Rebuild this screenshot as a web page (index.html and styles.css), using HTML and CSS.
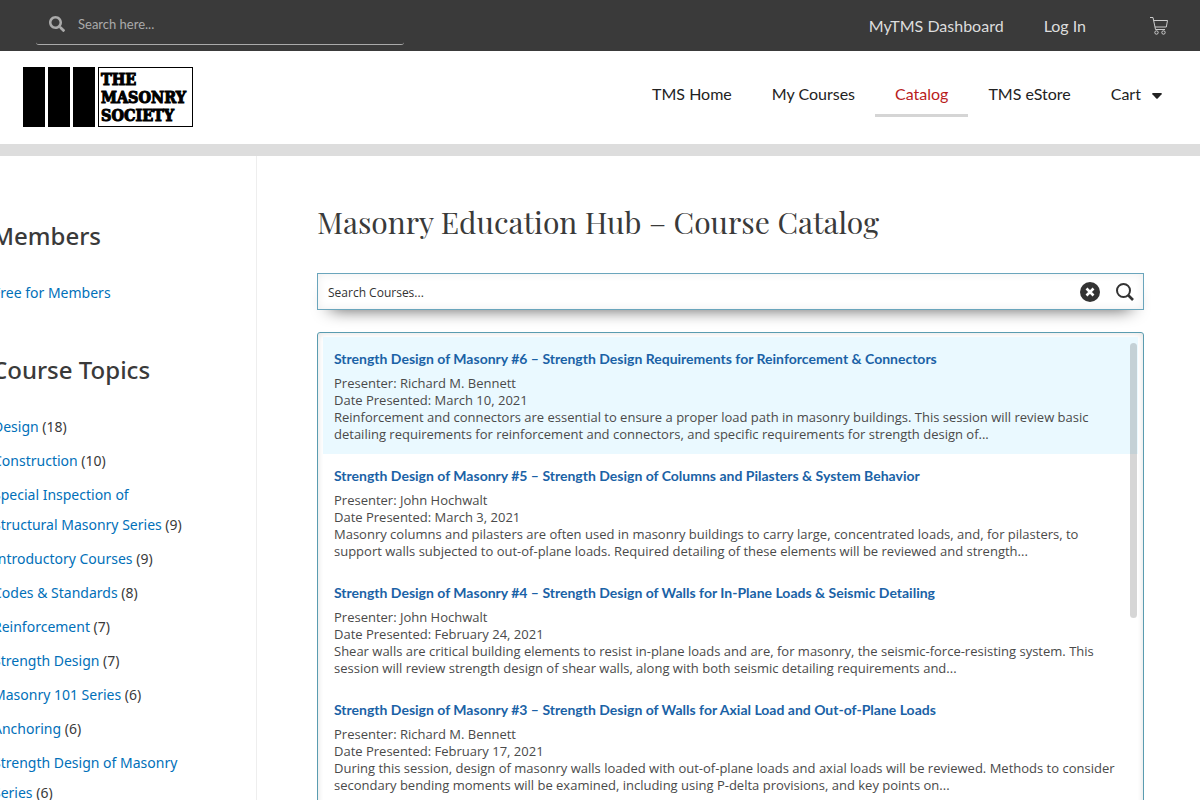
FILE: index.html
```html
<!DOCTYPE html>
<html lang="en">
<head>
    <meta charset="UTF-8">
    <meta name="viewport" content="width=device-width, initial-scale=1.0">
    <title>Masonry Education Hub</title>
    <link rel="stylesheet" href="styles.css">
</head>
<body>
    <div class="top-bar">
        <form class="site-search">
            <svg class="icon-search" viewBox="0 0 512 512" aria-hidden="true"><path fill="currentColor" d="M505 442.700L405.300 343c-4.500-4.500-10.600-7-17-7H372c27.600-35.300 44-79.700 44-128C416 93.100 322.900 0 208 0S0 93.100 0 208s93.100 208 208 208c48.300 0 92.700-16.400 128-44v16.300c0 6.400 2.500 12.500 7 17l99.700 99.700c9.400 9.400 24.600 9.400 33.900 0l28.300-28.300c9.400-9.400 9.400-24.600.1-34zM208 336c-70.700 0-128-57.200-128-128 0-70.700 57.200-128 128-128 70.700 0 128 57.200 128 128 0 70.700-57.200 128-128 128z"/></svg>
            <input type="search" placeholder="Search here..." aria-label="Search">
        </form>
        <nav class="account-nav">
            <a href="#">MyTMS Dashboard</a>
            <a href="#">Log In</a>
            <a href="#" class="basket" aria-label="View cart">
                <svg viewBox="0 0 18 18" fill="none" stroke="currentColor" aria-hidden="true">
                    <path d="M0 .5h3l2.500 12h9.500M3.700 3.500h13.800l-1.200 6.500H5"/>
                    <circle cx="6.500" cy="15.500" r="1.700"/>
                    <circle cx="13.500" cy="15.500" r="1.700"/>
                </svg>
            </a>
        </nav>
    </div>

    <header class="site-header">
        <a href="#" class="logo">
            <span class="bar"></span>
            <span class="bar"></span>
            <span class="bar"></span>
            <span class="logo-text">THE<br>MASONRY<br>SOCIETY</span>
        </a>
        <nav class="main-nav">
            <a href="#">TMS Home</a>
            <a href="#">My Courses</a>
            <a href="#" class="active">Catalog</a>
            <a href="#">TMS eStore</a>
            <a href="#">Cart <svg class="caret" viewBox="0 0 10 6" aria-hidden="true"><path fill="currentColor" d="M1 0h8q1.300.2.600 1.200L5.700 5.500q-.7.700-1.400 0L.4 1.200Q-.3.200 1 0z"/></svg></a>
        </nav>
    </header>

    <div class="content">
        <aside class="sidebar">
            <h2>Members</h2>
            <ul>
                <li><a href="#">Free for Members</a></li>
            </ul>
            <h2>Course Topics</h2>
            <ul>
                <li><a href="#">Design</a> (18)</li>
                <li><a href="#">Construction</a> (10)</li>
                <li><a href="#">Special Inspection of Structural Masonry Series</a> (9)</li>
                <li><a href="#">Introductory Courses</a> (9)</li>
                <li><a href="#">Codes &amp; Standards</a> (8)</li>
                <li><a href="#">Reinforcement</a> (7)</li>
                <li><a href="#">Strength Design</a> (7)</li>
                <li><a href="#">Masonry 101 Series</a> (6)</li>
                <li><a href="#">Anchoring</a> (6)</li>
                <li><a href="#">Strength Design of Masonry Series</a> (6)</li>
            </ul>
        </aside>

        <main class="catalog">
            <h1>Masonry Education Hub – Course Catalog</h1>

            <form class="course-search">
                <input type="text" placeholder="Search Courses..." aria-label="Search Courses">
                <button type="reset" aria-label="Clear">
                    <svg class="icon-clear" viewBox="0 0 20 20" aria-hidden="true"><circle cx="10" cy="10" r="10" fill="#333"/><path d="M6.500 6.500l7 7M13.500 6.500l-7 7" stroke="#fff" stroke-width="2.600"/></svg>
                </button>
                <button type="submit" aria-label="Search">
                    <svg class="icon-find" viewBox="0 0 18 18" fill="none" stroke="#333" aria-hidden="true"><circle cx="7.500" cy="7.500" r="6.500" stroke-width="2"/><path d="M12 12l5 5" stroke-width="2.600"/></svg>
                </button>
            </form>

            <div class="results">
                <article class="result hovered">
                    <h3><a href="#">Strength Design of Masonry #6 – Strength Design Requirements for Reinforcement &amp; Connectors</a></h3>
                    <p>Presenter: Richard M. Bennett<br>Date Presented: March 10, 2021<br>Reinforcement and connectors are essential to ensure a proper load path in masonry buildings. This session will review basic detailing requirements for reinforcement and connectors, and specific requirements for strength design of...</p>
                </article>
                <article class="result">
                    <h3><a href="#">Strength Design of Masonry #5 – Strength Design of Columns and Pilasters &amp; System Behavior</a></h3>
                    <p>Presenter: John Hochwalt<br>Date Presented: March 3, 2021<br>Masonry columns and pilasters are often used in masonry buildings to carry large, concentrated loads, and, for pilasters, to support walls subjected to out-of-plane loads. Required detailing of these elements will be reviewed and strength...</p>
                </article>
                <article class="result">
                    <h3><a href="#">Strength Design of Masonry #4 – Strength Design of Walls for In-Plane Loads &amp; Seismic Detailing</a></h3>
                    <p>Presenter: John Hochwalt<br>Date Presented: February 24, 2021<br>Shear walls are critical building elements to resist in-plane loads and are, for masonry, the seismic-force-resisting system. This session will review strength design of shear walls, along with both seismic detailing requirements and...</p>
                </article>
                <article class="result">
                    <h3><a href="#">Strength Design of Masonry #3 – Strength Design of Walls for Axial Load and Out-of-Plane Loads</a></h3>
                    <p>Presenter: Richard M. Bennett<br>Date Presented: February 17, 2021<br>During this session, design of masonry walls loaded with out-of-plane loads and axial loads will be reviewed. Methods to consider secondary bending moments will be examined, including using P-delta provisions, and key points on...</p>
                </article>
                <span class="scroll-thumb"></span>
            </div>
        </main>
    </div>
</body>
</html>
```
FILE: styles.css
```css
* {
    box-sizing: border-box;
}
html {
    overflow-x: hidden;
    scrollbar-width: none;
}
body {
    margin: 0;
    background-color: #fff;
    color: #3a3a3a;
    font-family: "Open Sans", sans-serif;
    font-size: 14px;
}
a {
    color: #0170b9;
    text-decoration: none;
}
h1, h2, h3, p, ul {
    margin: 0;
    padding: 0;
}
input, button {
    border: none;
    background: none;
    padding: 0;
    outline: none;
}
button {
    cursor: pointer;
    display: flex;
}

/* top bar */
.top-bar {
    display: flex;
    justify-content: space-between;
    height: 51px;
    padding: 0 32px 0 36px;
    background-color: #3a3a3a;
}
.site-search {
    display: flex;
    align-items: center;
    gap: 13px;
    width: 368px;
    height: 45px;
    padding: 4px 13px 0;
    border-bottom: 1px solid #aaa;
    border-radius: 3px;
    color: #aaa;
}
.icon-search {
    width: 16px;
    height: 16px;
}
.site-search input {
    flex: 1;
    color: #aaa;
    font-family: Lato, sans-serif;
    font-size: 13px;
}
.site-search input::placeholder {
    color: #aaa;
}
.account-nav {
    display: flex;
    align-items: center;
    gap: 40px;
}
.account-nav a {
    color: #ddd;
    font-family: Lato, sans-serif;
    font-size: 16px;
}
.account-nav .basket {
    display: flex;
    margin-left: 24px;
    color: #ccc;
}
.basket svg {
    width: 18px;
    height: 18px;
}

/* header */
.site-header {
    display: flex;
    justify-content: space-between;
    align-items: flex-start;
    height: 105px;
    padding: 16px 18px 0 23px;
    border-bottom: 12px solid #ddd;
}
.logo {
    display: flex;
    gap: 3px;
    height: 60px;
}
.logo .bar {
    width: 22px;
    background-color: #000;
}
.logo-text {
    width: 95px;
    padding: 3px 0 0 2px;
    border: 1px solid #000;
    color: #000;
    font-family: "DejaVu Serif Condensed", "DejaVu Serif", serif;
    font-size: 16px;
    font-weight: bold;
    line-height: 18px;
    -webkit-text-stroke: 1px #000;
}
.main-nav {
    display: flex;
}
.main-nav a {
    padding: 15px 20px 8px;
    border-bottom: 3px solid transparent;
    color: #222;
    font-family: Lato, sans-serif;
    font-size: 16px;
    line-height: 24px;
}
.main-nav .active {
    border-bottom-color: #d5d5d5;
    color: #b91c1c;
}
.caret {
    width: 10px;
    height: 6px;
    margin-left: 7px;
    vertical-align: middle;
}

/* layout */
.content {
    display: flex;
}
.sidebar {
    flex: 0 0 257px;
    padding: 64px 70px 0 0;
    border-right: 1px solid #eee;
    font-family: "Noto Sans", sans-serif;
}
.sidebar h2 {
    margin: 0 0 26px -8px;
    font-size: 24px;
    font-weight: 500;
    line-height: 32px;
}
.sidebar ul {
    margin: 0 0 46px -7px;
    list-style: none;
}
.sidebar li {
    margin-bottom: 4px;
    line-height: 30px;
}
.catalog {
    flex: 1;
    min-width: 0;
    padding: 43px 56px 20px 60px;
}
.catalog h1 {
    margin-bottom: 28px;
    font-family: "Playfair Display", "Liberation Serif", serif;
    font-size: 30px;
    font-weight: normal;
    line-height: 46px;
}

/* course search */
.course-search {
    display: flex;
    align-items: center;
    gap: 16px;
    height: 37px;
    margin-bottom: 22px;
    padding: 0 9px 0 10px;
    border: 1px solid #6aa5bc;
    box-shadow: 0 10px 18px -13px #000, inset 0 0 10px 0 #eee;
}
.course-search input {
    flex: 1;
    padding-top: 2px;
    color: #333;
    font-family: "Open Sans", sans-serif;
    font-size: 12px;
}
.course-search input::placeholder {
    color: #333;
}
.icon-clear {
    width: 20px;
    height: 20px;
}
.icon-find {
    width: 18px;
    height: 18px;
}

/* results */
.results {
    position: relative;
    padding: 4px 5px;
    border: 1px solid #5a9cb0;
    border-radius: 3px;
    box-shadow: inset 0 0 6px 0 #ddd;
}
.result {
    padding: 11px 20px 11px 11px;
    background-color: #fff;
}
.result.hovered {
    background-color: #eaf9ff;
}
.result h3 {
    margin-bottom: 5px;
    font-family: Lato, sans-serif;
    font-size: 14px;
    font-weight: bold;
    line-height: 22px;
}
.result h3 a {
    color: #1a62a6;
}
.result p {
    color: #4a4a4a;
    font-size: 13px;
    line-height: 17px;
}
.scroll-thumb {
    position: absolute;
    top: 10px;
    right: 6px;
    width: 7px;
    height: 275px;
    border-radius: 4px;
    background-color: rgba(0, 0, 0, 0.16);
}
```
